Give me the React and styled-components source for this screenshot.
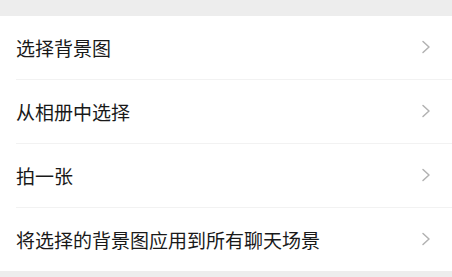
import React from "react";
import styled, { createGlobalStyle } from "styled-components";

const Global = createGlobalStyle`
  html, body { margin: 0; padding: 0; background: #ededed; }
  body { font-family: "Noto Sans CJK SC", "Noto Sans", sans-serif; }
`;

const Page = styled.div`
  width: 452px;
  height: 277px;
  background: #ededed;
  padding-top: 16px;
  box-sizing: border-box;
  overflow: hidden;
`;

const List = styled.div`
  background: #ffffff;
  display: flex;
  flex-direction: column;
`;

const Row = styled.div`
  height: 63px;
  display: flex;
  align-items: center;
  justify-content: space-between;
  padding: 0 21px 0 16px;
  box-sizing: border-box;
  ${(p) =>
    p.$divider &&
    `
    border-bottom: 1px solid #f2f2f2;
    margin-left: 16px;
    padding-left: 0;
    height: 64px;
  `}
`;

const Label = styled.span`
  font-size: 19px;
  color: #191919;
  line-height: 1;
`;

const ChevronIcon = styled.svg`
  display: block;
  margin-top: -2px;
`;

const Chevron = () => (
  <ChevronIcon width="10" height="14" viewBox="0 0 10 14" fill="none">
    <path d="M2 1.5 L8 7 L2 12.5" stroke="#b2b2b2" strokeWidth="1.5" strokeLinecap="round" strokeLinejoin="round" />
  </ChevronIcon>
);

const items = ["选择背景图", "从相册中选择", "拍一张", "将选择的背景图应用到所有聊天场景"];

export default function App() {
  return (
    <Page>
      <Global />
      <List>
        {items.map((t, i) => (
          <Row key={t} $divider={i < items.length - 1}>
            <Label>{t}</Label>
            <Chevron />
          </Row>
        ))}
      </List>
    </Page>
  );
}
